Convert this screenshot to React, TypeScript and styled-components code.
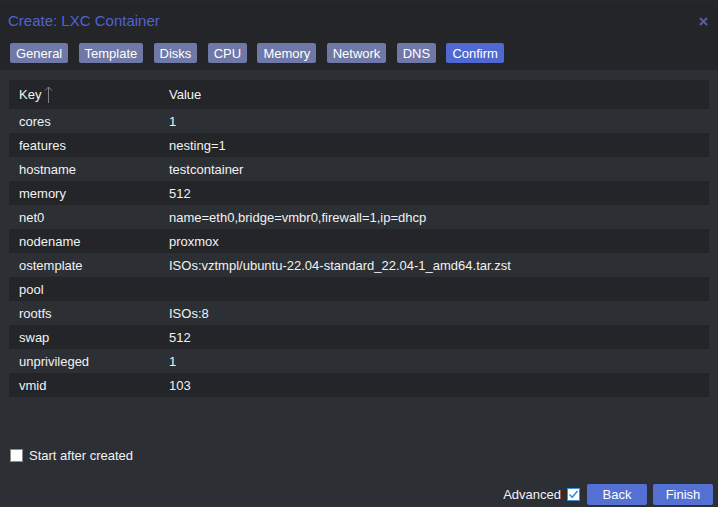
import styled, { createGlobalStyle } from "styled-components";

const GlobalStyle = createGlobalStyle`
  html, body {
    margin: 0;
    padding: 0;
    background: #2c2f34;
  }
  * {
    box-sizing: border-box;
  }
`;

const TABS = ["General", "Template", "Disks", "CPU", "Memory", "Network", "DNS", "Confirm"];

const ROWS: [string, string][] = [
  ["cores", "1"],
  ["features", "nesting=1"],
  ["hostname", "testcontainer"],
  ["memory", "512"],
  ["net0", "name=eth0,bridge=vmbr0,firewall=1,ip=dhcp"],
  ["nodename", "proxmox"],
  ["ostemplate", "ISOs:vztmpl/ubuntu-22.04-standard_22.04-1_amd64.tar.zst"],
  ["pool", ""],
  ["rootfs", "ISOs:8"],
  ["swap", "512"],
  ["unprivileged", "1"],
  ["vmid", "103"],
];

const App = () => {
  return (
    <>
      <GlobalStyle />
      <Window>
        <Header>
          <TitleBar>
            <Title>Create: LXC Container</Title>
            <CloseButton type="button" aria-label="close">
              <svg width="9" height="9" viewBox="0 0 9 9">
                <path d="M1 1 L8 8 M8 1 L1 8" stroke="#585ca6" strokeWidth="2" />
              </svg>
            </CloseButton>
          </TitleBar>
          <TabBar>
            {TABS.map((tab) => (
              <Tab key={tab} type="button" $active={tab === "Confirm"}>
                {tab}
              </Tab>
            ))}
          </TabBar>
        </Header>

        <Body>
          <Table>
            <HeadRow>
              <KeyCell>
                Key
                <SortArrow width="9" height="17" viewBox="0 0 9 17">
                  <path d="M4.5 1 L4.5 17 M1 4.5 L4.5 1 L8 4.5" stroke="#80838b" strokeWidth="1" fill="none" />
                </SortArrow>
              </KeyCell>
              <ValueCell>Value</ValueCell>
            </HeadRow>
            {ROWS.map(([key, value], i) => (
              <Row key={key} $odd={i % 2 === 1}>
                <KeyCell>{key}</KeyCell>
                <ValueCell>{value}</ValueCell>
              </Row>
            ))}
          </Table>

          <Spacer />

          <StartRow>
            <Box />
            <span>Start after created</span>
          </StartRow>
        </Body>

        <Footer>
          <AdvancedLabel>
            Advanced
            <CheckedBox>
              <svg width="11" height="11" viewBox="0 0 11 11">
                <path d="M1.5 5.5 L4.2 8.2 L9.5 2" stroke="#3b8fd8" strokeWidth="1.6" fill="none" />
              </svg>
            </CheckedBox>
          </AdvancedLabel>
          <ActionButton type="button">Back</ActionButton>
          <ActionButton type="button">Finish</ActionButton>
        </Footer>
      </Window>
    </>
  );
};

export default App;

const Window = styled.div`
  width: 718px;
  height: 507px;
  display: flex;
  flex-direction: column;
  background: #2c2f34;
  font-family: "Liberation Sans", Arial, sans-serif;
  color: #f2f2f2;
  overflow: hidden;
  border-top: 1px solid #26282c;
`;

const Header = styled.div`
  background: #232529;
  padding-bottom: 7px;
`;

const TitleBar = styled.div`
  height: 37px;
  display: flex;
  align-items: center;
  justify-content: space-between;
  padding: 2px 10px 0 8px;
`;

const Title = styled.div`
  font-size: 15px;
  color: #4f63d2;
`;

const CloseButton = styled.button`
  display: flex;
  align-items: center;
  justify-content: center;
  padding: 0;
  margin-top: 2px;
  background: none;
  border: none;
  cursor: pointer;
`;

const TabBar = styled.div`
  display: flex;
  gap: 10.3px;
  padding: 5px 10px 0;
`;

const Tab = styled.button<{ $active: boolean }>`
  height: 20px;
  padding: 0 6px;
  border: none;
  border-radius: 2px;
  background: ${(p) => (p.$active ? "#5068d2" : "#6f78a6")};
  color: #ffffff;
  font-family: "Liberation Sans", Arial, sans-serif;
  font-size: 13px;
  cursor: pointer;
`;

const Body = styled.div`
  flex: 1;
  display: flex;
  flex-direction: column;
  padding: 10px 9px 0;
`;

const Table = styled.div`
  width: 700px;
  font-size: 13px;
`;

const HeadRow = styled.div`
  height: 29px;
  display: flex;
  align-items: center;
  background: #232529;
`;

const Row = styled.div<{ $odd: boolean }>`
  height: 24px;
  display: flex;
  align-items: center;
  background: ${(p) => (p.$odd ? "#232529" : "#2c2f34")};
`;

const KeyCell = styled.div`
  width: 160px;
  padding-left: 10px;
  display: flex;
  align-items: center;
  gap: 3px;
`;

const ValueCell = styled.div`
  flex: 1;
`;

const SortArrow = styled.svg`
  margin-top: -1px;
`;

const Spacer = styled.div`
  flex: 1;
`;

const StartRow = styled.label`
  display: flex;
  align-items: center;
  gap: 6px;
  margin: 0 0 21px 1px;
  font-size: 13px;
`;

const Box = styled.span`
  width: 13px;
  height: 13px;
  background: #ffffff;
  border: 1px solid #8a8a8a;
`;

const Footer = styled.div`
  display: flex;
  justify-content: flex-end;
  align-items: center;
  gap: 6px;
  padding: 0 5px 2px 0;
`;

const AdvancedLabel = styled.label`
  display: flex;
  align-items: center;
  gap: 6px;
  margin-right: 1px;
  font-size: 13px;
`;

const CheckedBox = styled.span`
  width: 13px;
  height: 13px;
  display: flex;
  align-items: center;
  justify-content: center;
  background: #ffffff;
  border: 1px solid #3b8fd8;
`;

const ActionButton = styled.button`
  width: 60px;
  height: 21px;
  border: none;
  border-radius: 2px;
  background: #5470d2;
  color: #ffffff;
  font-family: "Liberation Sans", Arial, sans-serif;
  font-size: 13px;
  cursor: pointer;
`;
